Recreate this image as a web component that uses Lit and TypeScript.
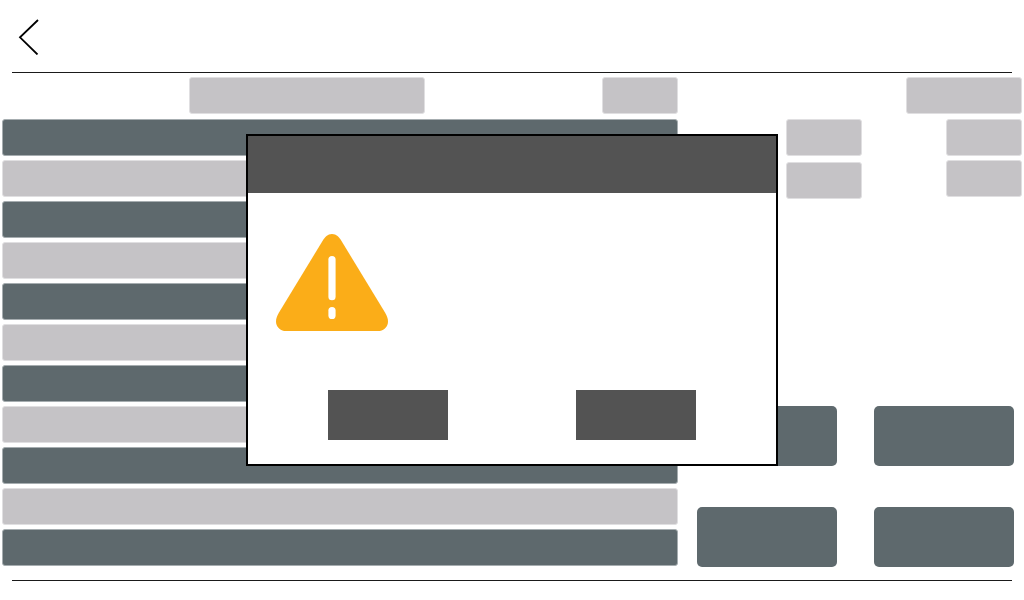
import { LitElement, html, css } from "lit";
import { customElement, property } from "lit/decorators.js";
import { classMap } from "lit/directives/class-map.js";

@customElement("warning-dialog")
class WarningDialog extends LitElement {
  static styles = css`
    :host {
      display: contents;
    }
    .dialog {
      position: fixed;
      inset: 0;
      margin: auto;
      box-sizing: border-box;
      display: flex;
      flex-direction: column;
      width: 532px;
      height: 332px;
      max-width: 100%;
      padding: 0;
      border: 2px solid #000;
      background: #fff;
    }
    .title {
      flex: 0 0 57px;
      background: #535353;
    }
    .message {
      flex: 1;
      padding: 41px 28px 0;
    }
    .icon {
      display: block;
      width: 112px;
      height: 97px;
    }
    .buttons {
      display: flex;
      justify-content: space-between;
      padding: 0 80px 24px;
    }
    .button {
      width: 120px;
      height: 50px;
      padding: 0;
      border: 0;
      background: #535353;
    }
  `;

  render() {
    return html`
      <dialog class="dialog" open aria-label="Warning">
        <header class="title"></header>
        <div class="message">
          <svg class="icon" viewBox="0 0 112 97" aria-hidden="true">
            <path
              fill="#fbad18"
              d="M46.500 7C49 3 51.500 0 56 0S63 3 65.500 7L109 78.500C111 82 112 84.500 112 87.500C112 93.500 107 97.500 99.500 97.500H12.500C5 97.500 0 93.500 0 87.500C0 84.500 1 82 3 78.500Z"
            />
            <rect x="52.400" y="22" width="7.200" height="44.300" rx="3.600" fill="#fff" />
            <rect x="52.400" y="73" width="7.200" height="12" rx="3.600" fill="#fff" />
          </svg>
        </div>
        <div class="buttons">
          <button class="button" type="button" aria-label="Confirm"></button>
          <button class="button" type="button" aria-label="Cancel"></button>
        </div>
      </dialog>
    `;
  }
}

@customElement("app-root")
class AppRoot extends LitElement {
  @property({ type: Number }) rows = 11;

  static styles = css`
    :host {
      display: flex;
      flex-direction: column;
      box-sizing: border-box;
      min-height: 100vh;
      background: #fff;
      font-family: "Liberation Sans", Arial, sans-serif;
    }
    .top {
      display: flex;
      align-items: center;
      height: 72px;
      margin: 0 12px;
      border-bottom: 1px solid #1a1a1a;
    }
    .back {
      display: flex;
      padding: 6px;
      border: 0;
      background: none;
    }
    .arrow {
      width: 22px;
      height: 38px;
    }
    .main {
      flex: 1;
      display: grid;
      grid-template-columns: minmax(0, 1fr) 344px;
      padding: 4px 2px 13px;
    }
    .list,
    .side {
      display: flex;
      flex-direction: column;
      gap: 5px;
    }
    .summary {
      display: flex;
      justify-content: space-between;
      padding-left: 187px;
    }
    .chip,
    .row {
      box-sizing: border-box;
      height: 37px;
      border: 1px solid #e0dfe1;
      border-radius: 3px;
      background: #c5c3c6;
    }
    .chip {
      width: 76px;
    }
    .wide {
      width: 236px;
    }
    .medium {
      width: 116px;
      align-self: flex-end;
    }
    .rows {
      display: flex;
      flex-direction: column;
      gap: 4px;
      margin: 0;
      padding: 0;
      list-style: none;
    }
    .dark {
      border-color: #a6adb0;
      background: #5e696d;
    }
    .values {
      display: flex;
      justify-content: space-between;
      padding-left: 108px;
    }
    .column {
      display: flex;
      flex-direction: column;
      gap: 4px;
    }
    .loose {
      gap: 6px;
    }
    .actions {
      display: grid;
      grid-template-columns: 1fr 1fr;
      gap: 41px 37px;
      margin-top: auto;
      padding: 0 8px 0 19px;
    }
    .action {
      height: 60px;
      padding: 0;
      border: 0;
      border-radius: 5px;
      background: #5e696d;
    }
    .bottom {
      height: 19px;
      margin: 0 12px;
      border-top: 1px solid #1a1a1a;
    }
  `;

  render() {
    const actions = ["Add", "Edit", "Delete", "Save"];
    return html`
      <header class="top">
        <button class="back" type="button" aria-label="Back">
          <svg class="arrow" viewBox="0 0 22 38" aria-hidden="true">
            <path d="M20 3L2 20.300L19.500 37.500" fill="none" stroke="#000" stroke-width="1.800" />
          </svg>
        </button>
      </header>
      <main class="main">
        <section class="list">
          <div class="summary">
            <div class="chip wide"></div>
            <div class="chip"></div>
          </div>
          <ul class="rows">
            ${Array.from(
              { length: this.rows },
              (_, i) => html`<li class=${classMap({ row: true, dark: i % 2 === 0 })}></li>`
            )}
          </ul>
        </section>
        <section class="side">
          <div class="chip medium"></div>
          <div class="values">
            <div class="column loose">
              <div class="chip"></div>
              <div class="chip"></div>
            </div>
            <div class="column">
              <div class="chip"></div>
              <div class="chip"></div>
            </div>
          </div>
          <div class="actions">
            ${actions.map((name) => html`<button class="action" type="button" aria-label=${name}></button>`)}
          </div>
        </section>
      </main>
      <footer class="bottom"></footer>
      <warning-dialog></warning-dialog>
    `;
  }
}
